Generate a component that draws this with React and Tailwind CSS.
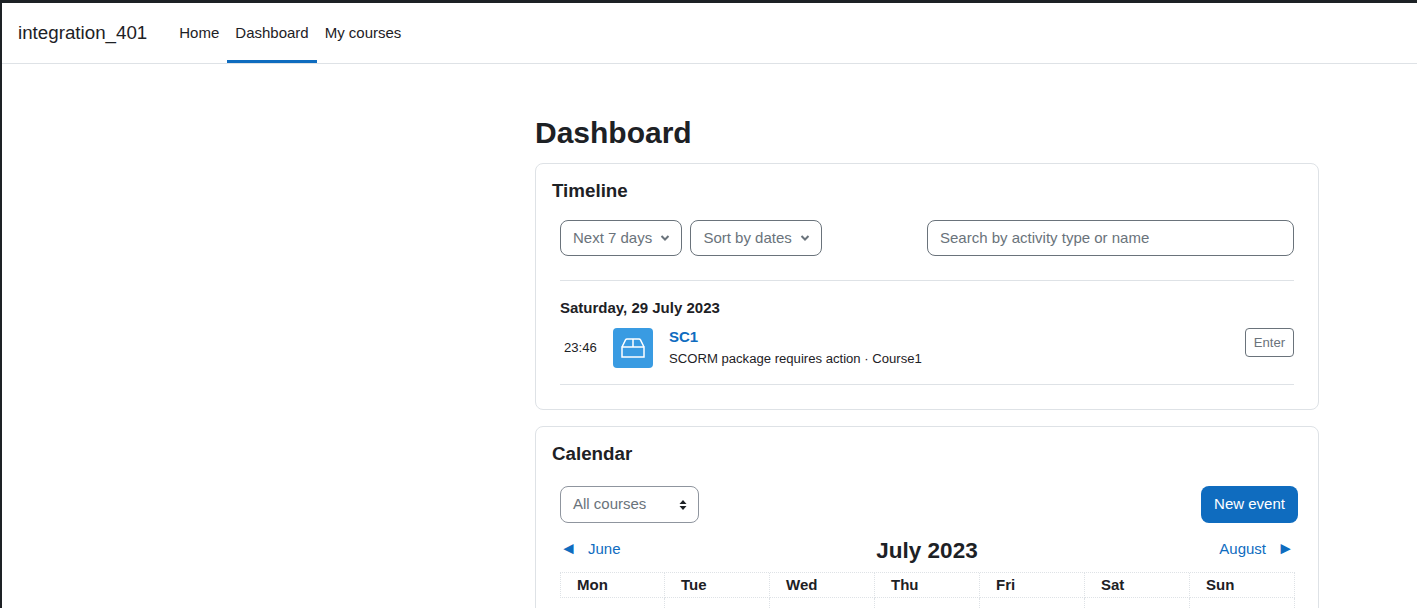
function Chevron() {
  return (
    <svg viewBox="0 0 10 6" className="ml-2 h-[6px] w-[10px] text-[#6a737b]" fill="none" stroke="currentColor" strokeWidth="2">
      <path d="M1.5 1l3.5 3.5L8.5 1" />
    </svg>
  );
}

function Dropdown({ label, className }) {
  return (
    <div className={`flex h-9 items-center rounded-lg border border-[#6a737b] pl-3 text-[15px] text-[#6a737b] ${className}`}>
      {label}
      <Chevron />
    </div>
  );
}

const days = ['Mon', 'Tue', 'Wed', 'Thu', 'Fri', 'Sat', 'Sun'];

export default function App() {
  return (
    <div className="h-[608px] overflow-hidden border-t-[3px] border-l-2 border-[#1d2125] bg-white font-['Liberation_Sans',sans-serif] text-[15px] text-[#1d2125]">
      <nav className="flex h-[61px] items-stretch border-b border-[#dee2e6] pl-4">
        <div className="flex items-center text-[18.75px]">integration_401</div>
        <div className="ml-6 flex">
          <div className="flex items-center border-b-[3px] border-transparent px-2 pt-[3px]">Home</div>
          <div className="flex items-center border-b-[3px] border-[#0f6cbf] px-2 pt-[3px]">Dashboard</div>
          <div className="flex items-center border-b-[3px] border-transparent px-2 pt-[3px]">My courses</div>
        </div>
      </nav>

      <main className="ml-[533px] w-[784px] pt-[51px]">
        <h1 className="mb-[12px] text-[30px] leading-9 font-bold">Dashboard</h1>

        <section className="h-[247px] rounded-lg border border-[#dee2e6] p-4">
          <h2 className="text-[18.75px] leading-[22px] font-bold">Timeline</h2>
          <div className="mx-2 mt-[18px]">
            <div className="flex items-center">
              <Dropdown label="Next 7 days" className="w-[122px]" />
              <Dropdown label="Sort by dates" className="ml-[8.4px] w-[131.6px]" />
              <div className="ml-auto flex h-9 w-[367px] items-center rounded-lg border border-[#6a737b] pl-3 text-[#6a737b]">
                Search by activity type or name
              </div>
            </div>
            <div className="mt-6 border-t border-[#dee2e6] pt-[18px]">
              <h3 className="text-[15px] leading-[18px] font-bold">Saturday, 29 July 2023</h3>
              <div className="mt-[11px] flex items-center border-b border-[#dee2e6] pb-4">
                <div className="w-[53px] pl-1 text-[13.125px]">23:46</div>
                <div className="flex h-10 w-10 items-center justify-center rounded bg-[#399be2]">
                  <svg viewBox="0 0 24 20" className="h-5 w-6" fill="none" stroke="white" strokeWidth="1.5">
                    <path d="M1 9h22v10H1zM1 9l3.5-7.2Q5 1 6 1h12q1 0 1.5.8L23 9M12 1v8" />
                  </svg>
                </div>
                <div className="ml-4">
                  <div className="text-[15px] leading-[18px] font-bold text-[#0f6cbf]">SC1</div>
                  <div className="mt-1 text-[13.125px] leading-[18px]">SCORM package requires action · Course1</div>
                </div>
                <div className="mb-[11px] ml-auto flex h-[29px] w-[49px] items-center justify-center rounded border border-[#6a737b] text-[13.125px] text-[#6a737b]">
                  Enter
                </div>
              </div>
            </div>
          </div>
        </section>

        <section className="mt-4 rounded-lg border border-[#dee2e6] p-4">
          <h2 className="text-[18.75px] leading-[22px] font-bold">Calendar</h2>
          <div className="mx-2 mt-[21px]">
            <div className="flex items-center justify-between">
              <div className="flex h-[37px] w-[139px] items-center justify-between rounded-lg border border-[#8f959e] pr-[11px] pl-3 text-[#6a737b]">
                All courses
                <svg viewBox="0 0 8 10" className="h-[10px] w-2 text-[#1d2125]" fill="currentColor">
                  <path d="M4 0l3.5 4h-7zM4 10L.5 6h7z" />
                </svg>
              </div>
              <div className="-mr-1 flex h-[37px] w-[97px] items-center justify-center rounded-lg bg-[#0f6cbf] text-white">
                New event
              </div>
            </div>
            <div className="mt-[10px] flex h-[40px] items-start justify-between text-[#0f6cbf]">
              <div className="flex w-[200px] items-center pt-[7px] leading-[18px]">
                <span className="w-7 text-[17px]">◄</span>
                <span>June</span>
              </div>
              <div className="pt-[4px] text-[22.5px] leading-[28px] font-bold text-[#1d2125]">July 2023</div>
              <div className="flex w-[200px] items-center justify-end pt-[7px] leading-[18px]">
                <span>August</span>
                <span className="w-7 text-right text-[17px]">►</span>
              </div>
            </div>
            <div className="-mt-[1px] grid w-[735px] grid-cols-7 border-t border-dotted border-[#dee2e6]">
              {days.map((d) => (
                <div key={d} className="h-[25px] border-r border-b border-dotted border-[#dee2e6] pl-4 leading-[24px] font-bold first:border-l">
                  {d}
                </div>
              ))}
              {days.map((d) => (
                <div key={d} className="h-[60px] border-r border-b border-dotted border-[#dee2e6] first:border-l" />
              ))}
            </div>
          </div>
        </section>
      </main>
    </div>
  );
}
